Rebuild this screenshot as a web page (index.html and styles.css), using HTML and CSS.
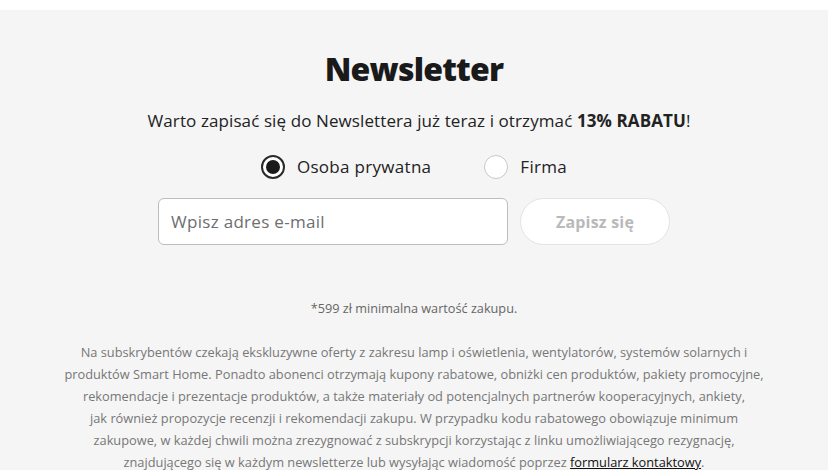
FILE: index.html
```html
<!DOCTYPE html>
<html lang="pl">
<head>
    <meta charset="UTF-8">
    <meta name="viewport" content="width=device-width, initial-scale=1.0">
    <title>Newsletter</title>
    <link rel="stylesheet" href="styles.css">
</head>
<body>
    <div class="topBar"></div>
    <section class="newsletter">
        <h2 class="newsletter-title">Newsletter</h2>
        <p class="newsletter-lead">Warto zapisać się do Newslettera już teraz i otrzymać <b>13% RABATU</b>!</p>

        <div class="customerType">
            <label class="radio">
                <input type="radio" name="customerType" value="private" checked>
                <span class="radio-mark"></span>
                Osoba prywatna
            </label>
            <label class="radio">
                <input type="radio" name="customerType" value="company">
                <span class="radio-mark"></span>
                Firma
            </label>
        </div>

        <form class="signup" onsubmit="return false">
            <input class="signup-email" type="email" placeholder="Wpisz adres e-mail">
            <button class="signup-button" type="submit" disabled>Zapisz się</button>
        </form>

        <p class="newsletter-note">*599 zł minimalna wartość zakupu.</p>

        <p class="newsletter-info">
            Na subskrybentów czekają ekskluzywne oferty z zakresu lamp i oświetlenia, wentylatorów, systemów solarnych i<br>
            produktów Smart Home. Ponadto abonenci otrzymają kupony rabatowe, obniżki cen produktów, pakiety promocyjne,<br>
            rekomendacje i prezentacje produktów, a także materiały od potencjalnych partnerów kooperacyjnych, ankiety,<br>
            jak również propozycje recenzji i rekomendacji zakupu. W przypadku kodu rabatowego obowiązuje minimum<br>
            zakupowe, w każdej chwili można zrezygnować z subskrypcji korzystając z linku umożliwiającego rezygnację,<br>
            znajdującego się w każdym newsletterze lub wysyłając wiadomość poprzez <a href="#">formularz kontaktowy</a>.
        </p>
    </section>
</body>
</html>
```

FILE: styles.css
```css
body, html {
    margin: 0;
    padding: 0;
    background-color: #fff;
    font-family: "Open Sans", "DejaVu Sans", sans-serif;
    color: #1a1a1a;
}

.topBar {
    height: 10px;
    background-color: #fff;
}

.newsletter {
    background-color: #f5f5f5;
    padding: 40px 20px 40px;
    text-align: center;
    min-height: 500px;
}

.newsletter-title {
    margin: 0;
    font-size: 32px;
    line-height: 38px;
    font-weight: 800;
    letter-spacing: -0.8px;
    color: #1a1a1a;
}

.newsletter-lead {
    margin: 21px 0 0;
    padding-left: 10px;
    font-size: 17px;
    line-height: 24px;
    letter-spacing: 0.1px;
    color: #222;
}

.newsletter-lead b {
    font-weight: 700;
}

.customerType {
    margin-top: 22px;
    display: flex;
    justify-content: center;
    gap: 53px;
}

.radio {
    display: flex;
    align-items: center;
    gap: 12px;
    font-size: 17px;
    line-height: 24px;
    letter-spacing: 0.3px;
    color: #222;
    cursor: pointer;
}

.radio input {
    display: none;
}

.radio-mark {
    width: 24px;
    height: 24px;
    box-sizing: border-box;
    border: 1px solid #c8c8c8;
    border-radius: 50%;
    background-color: #fff;
    display: flex;
    align-items: center;
    justify-content: center;
}

.radio input:checked + .radio-mark {
    border: 2px solid #2a2a2a;
}

.radio input:checked + .radio-mark::after {
    content: "";
    width: 14px;
    height: 14px;
    border-radius: 50%;
    background-color: #1a1a1a;
}

.signup {
    margin: 19px auto 0;
    display: flex;
    justify-content: center;
    gap: 12px;
}

.signup-email {
    width: 350px;
    height: 47px;
    box-sizing: border-box;
    padding: 0 12px;
    border: 1px solid #bdbdbd;
    border-radius: 6px;
    background-color: #fff;
    font-family: inherit;
    font-size: 17px;
    letter-spacing: 0.3px;
    color: #222;
}

.signup-email::placeholder {
    color: #6e6e6e;
}

.signup-button {
    width: 150px;
    height: 47px;
    border: 1px solid #e3e3e3;
    border-radius: 24px;
    background-color: #fff;
    font-family: inherit;
    font-size: 16px;
    font-weight: 700;
    letter-spacing: 0.2px;
    color: #b9b9b9;
}

.newsletter-note {
    margin: 53px 0 0;
    font-size: 12.7px;
    line-height: 20px;
    color: #666;
}

.newsletter-info {
    margin: 23px auto 0;
    font-size: 12.8px;
    line-height: 22px;
    color: #777;
}

.newsletter-info a {
    color: #111;
}
```
